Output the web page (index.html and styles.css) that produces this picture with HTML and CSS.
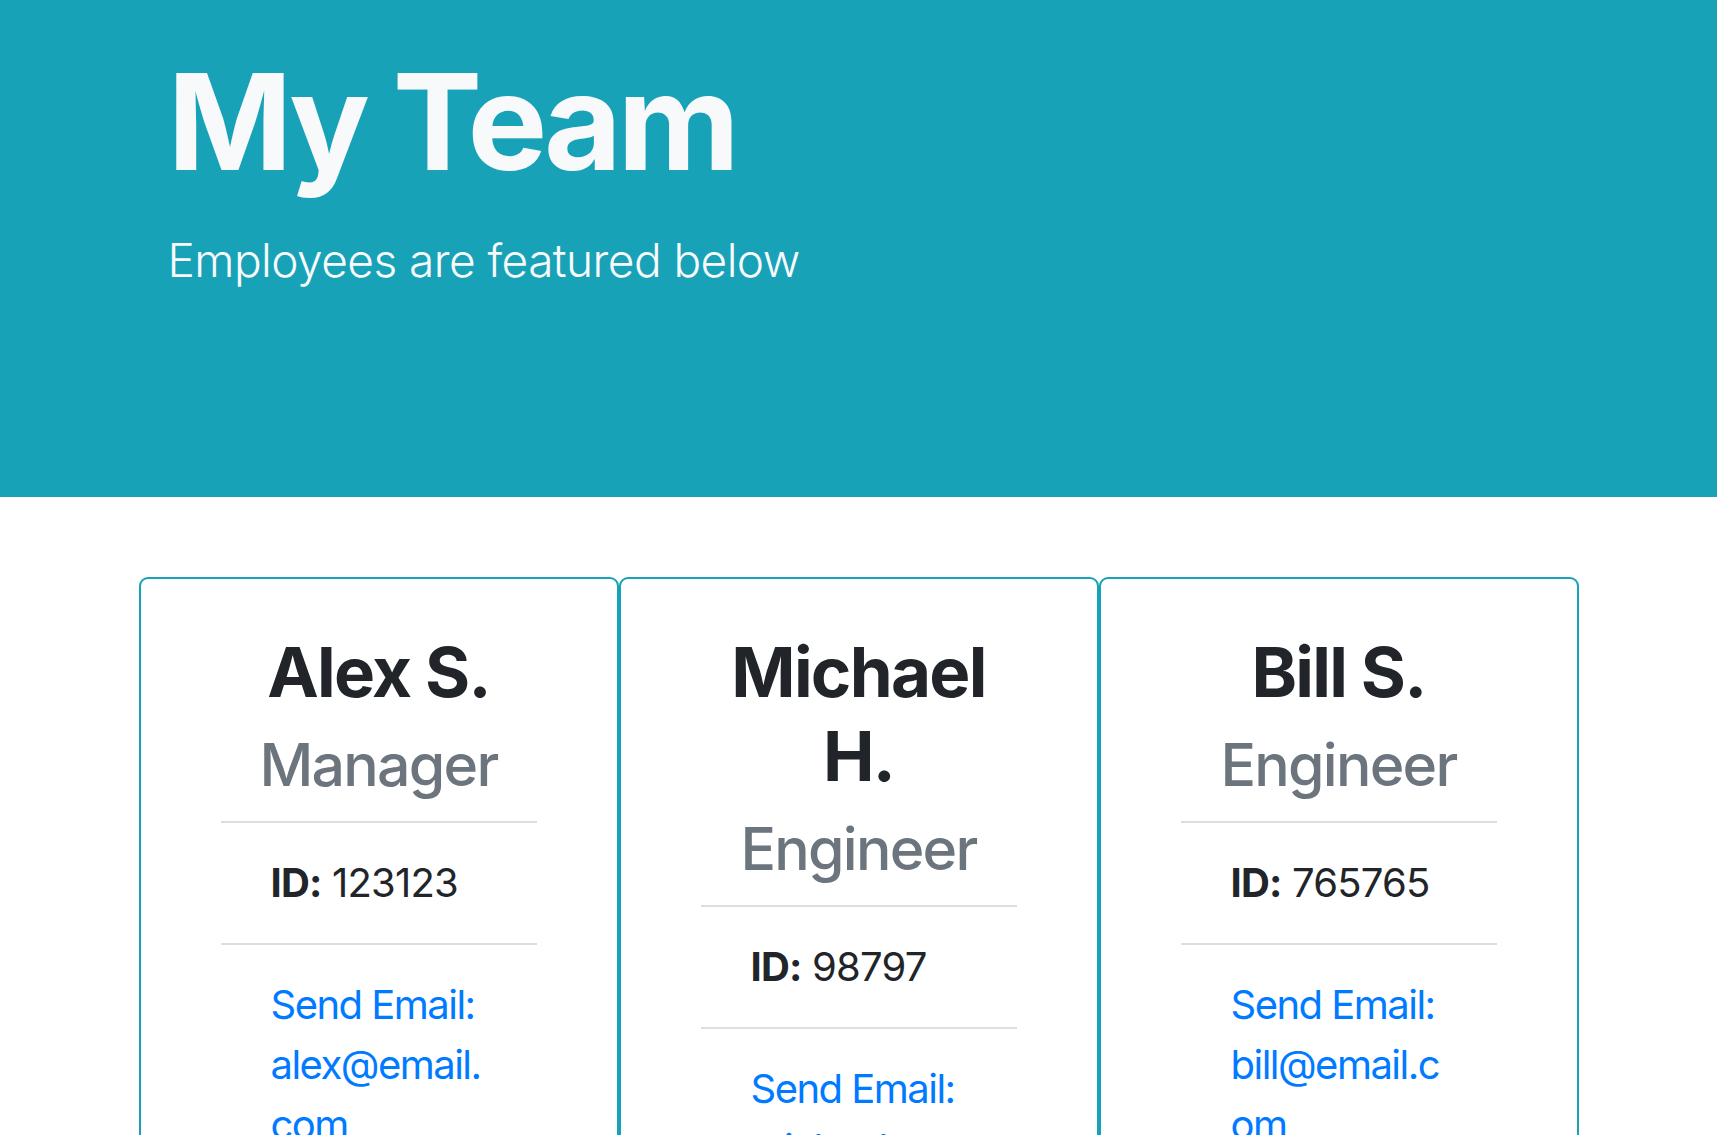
FILE: index.html
```html
<!DOCTYPE html>
<html lang="en">
<head>
<meta charset="utf-8">
<title>My Team</title>
<link rel="stylesheet" href="styles.css">
</head>
<body>
<header class="jumbotron">
  <div class="hero">
    <h1 class="hero-title">My Team</h1>
    <p class="hero-lead">Employees are featured below</p>
  </div>
</header>
<main class="team">
  <article class="card">
    <div class="card-head">
      <h3 class="card-name">Alex S.</h3>
      <h4 class="card-role">Manager</h4>
    </div>
    <ul class="details">
      <li class="detail"><strong>ID:</strong> 123123</li>
      <li class="detail"><a class="mail" href="mailto:alex@email.com">Send Email: alex@email.com</a></li>
      <li class="detail"><strong>Office:</strong> 101</li>
    </ul>
  </article>
  <article class="card">
    <div class="card-head">
      <h3 class="card-name">Michael H.</h3>
      <h4 class="card-role">Engineer</h4>
    </div>
    <ul class="details">
      <li class="detail"><strong>ID:</strong> 98797</li>
      <li class="detail"><a class="mail" href="mailto:michael@email.com">Send Email: michael@email.com</a></li>
      <li class="detail"><strong>GitHub:</strong> michaelh</li>
    </ul>
  </article>
  <article class="card">
    <div class="card-head">
      <h3 class="card-name">Bill S.</h3>
      <h4 class="card-role">Engineer</h4>
    </div>
    <ul class="details">
      <li class="detail"><strong>ID:</strong> 765765</li>
      <li class="detail"><a class="mail" href="mailto:bill@email.com">Send Email: bill@email.com</a></li>
      <li class="detail"><strong>GitHub:</strong> bills</li>
    </ul>
  </article>
</main>
</body>
</html>
```
FILE: styles.css
```css
* { box-sizing: border-box; }
html, body { margin: 0; padding: 0; }
body {
  font-family: Inter, "Noto Sans", "Liberation Sans", sans-serif;
  color: #212529;
  background: #ffffff;
}
.jumbotron {
  background: #17a2b8;
  color: #f8f9fa;
  height: 497px;
  padding-top: 37px;
}
.hero {
  width: 1440px;
  margin: 0 auto;
  padding-left: 29px;
}
.hero-title {
  margin: 0;
  font-size: 134px;
  line-height: 168px;
  font-weight: 700;
  letter-spacing: -0.033em;
  white-space: nowrap;
}
.hero-lead {
  margin: 20px 0 0;
  font-size: 46px;
  line-height: 70px;
  font-weight: 300;
  letter-spacing: -0.012em;
  white-space: nowrap;
}
.team {
  width: 1440px;
  margin: 0 auto;
  padding-top: 80px;
  display: flex;
  align-items: flex-start;
}
.card {
  flex: 0 0 480px;
  border: 2px solid #17a2b8;
  border-radius: 9px;
  padding: 51px 80px 40px;
  text-align: center;
}
.card-head { margin-bottom: 20px; }
.card-name {
  margin: 0;
  font-size: 69px;
  line-height: 84px;
  font-weight: 700;
  letter-spacing: -0.025em;
  color: #212529;
}
.card-role {
  margin: 15px 0 0;
  font-size: 59px;
  line-height: 72px;
  font-weight: 500;
  letter-spacing: -0.03em;
  color: #6c757d;
}
.details {
  list-style: none;
  margin: 0;
  padding: 0;
  text-align: left;
}
.detail {
  border-top: 2px solid #dedede;
  padding: 30px 50px;
  font-size: 40px;
  line-height: 60px;
  letter-spacing: -0.02em;
}
.detail strong { font-weight: 700; }
.mail {
  color: #007bff;
  text-decoration: none;
  letter-spacing: -0.038em;
  overflow-wrap: anywhere;
}
```
